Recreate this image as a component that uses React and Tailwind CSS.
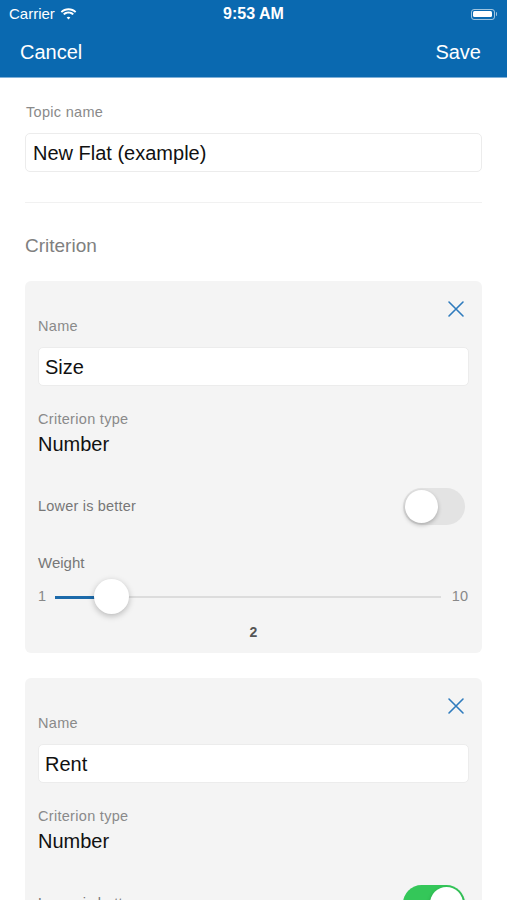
import React from 'react';

const font = { fontFamily: '"Helvetica Neue", "Liberation Sans", Arial, sans-serif' };

function CloseIcon() {
  return (
    <svg width="18" height="18" viewBox="0 0 18 18" fill="none" stroke="#2f7bbd" strokeWidth="1.6" strokeLinecap="round">
      <path d="M2 2L16 16M16 2L2 16" />
    </svg>
  );
}

function Toggle({ on }) {
  return (
    <div
      className={`w-[62px] h-[37px] rounded-full p-[2px] flex ${
        on ? 'bg-[#34c759] justify-end' : 'bg-[#e3e3e3] justify-start'
      }`}
    >
      <div className="w-[33px] h-[33px] rounded-full bg-white shadow-[0_2px_4px_rgba(0,0,0,0.25)]" />
    </div>
  );
}

function Criterion({ name, lowerBetter, weight }) {
  return (
    <div className="bg-[#f4f4f4] rounded-md px-[13px] pt-[20px] pb-[10px]">
      <div className="flex justify-end pr-[4px] h-[15px] items-center">
        <CloseIcon />
      </div>
      <div className="text-[14.5px] tracking-[0.3px] text-[#8a8a8a] leading-[20px]">Name</div>
      <div className="mt-[11px] h-[39px] bg-white rounded-[5px] border border-[#ececec] flex items-center px-[6px] text-[20px] text-[#111]">
        {name}
      </div>
      <div className="text-[14.5px] tracking-[0.3px] text-[#8a8a8a] mt-[23px] leading-[20px]">Criterion type</div>
      <div className="text-[20px] text-[#111] leading-[26px] mt-[2px]">Number</div>
      <div className="flex items-center justify-between mt-[31px] pr-[4px]">
        <div className="text-[14.5px] text-[#777] tracking-[0.2px]">Lower is better</div>
        <Toggle on={lowerBetter} />
      </div>
      <div className="text-[15px] text-[#777] mt-[28px] leading-[20px]">Weight</div>
      <div className="flex items-center h-[40px] mt-[4px] gap-[10px] pr-[1px]">
        <span className="text-[14.5px] text-[#888] w-[7px]">1</span>
        <div className="relative flex-1 h-[2px] bg-[#dcdcdc] mr-[1px]">
          <div className="absolute left-0 top-[-0.5px] h-[3px] w-[56px] bg-[#1c6aaa]" />
          <div className="absolute left-[39px] top-[-17px] w-[35px] h-[35px] rounded-full bg-white shadow-[0_2px_6px_rgba(0,0,0,0.25)]" />
        </div>
        <span className="text-[14.5px] text-[#888]">10</span>
      </div>
      <div className="text-center text-[14px] font-bold text-[#555] mt-[4px] leading-[22px]">{weight}</div>
    </div>
  );
}

export default function App() {
  return (
    <div className="w-[507px] h-[900px] overflow-hidden bg-white" style={font}>
      <div className="bg-[#0a69b0] text-white">
        <div className="h-[28px] flex items-center justify-between px-[9px] relative">
          <div className="flex items-center gap-[5px] text-[15px]">
            <span>Carrier</span>
            <svg width="17" height="12" viewBox="0 0 17 12" fill="white">
              <path d="M8.5 2.2c2.5 0 4.8 1 6.5 2.6l1.3-1.4C14.2 1.4 11.5 0.3 8.5 0.3S2.8 1.4 0.7 3.4L2 4.8c1.7-1.6 4-2.6 6.5-2.6z" />
              <path d="M8.5 5.5c1.6 0 3 .6 4.1 1.6l1.3-1.4C12.5 4.4 10.6 3.6 8.5 3.6S4.5 4.4 3.1 5.7l1.3 1.4c1.1-1 2.5-1.6 4.1-1.6z" />
              <path d="M8.5 8.7c.7 0 1.3.3 1.8.7L8.5 11.4 6.7 9.4c.5-.4 1.1-.7 1.8-.7z" />
            </svg>
          </div>
          <div className="absolute left-0 right-0 text-center text-[16px] font-bold pointer-events-none">9:53 AM</div>
          <div className="flex items-center pr-[1px]">
            <div className="w-[24px] h-[11px] rounded-[3px] border border-white/60 p-[1.5px]">
              <div className="w-full h-full bg-white rounded-[1.5px]" />
            </div>
            <div className="w-[1.5px] h-[4px] bg-white/60 rounded-r-sm ml-[1px]" />
          </div>
        </div>
        <div className="h-[50px] flex items-center justify-between px-[20px] pb-[2px] text-[20px] border-b border-[#7fb0d8]">
          <span>Cancel</span>
          <span className="pr-[6px]">Save</span>
        </div>
      </div>

      <div className="px-[25px]">
        <div className="text-[14.5px] tracking-[0.3px] text-[#8a8a8a] mt-[24px] pl-[1px] leading-[20px]">Topic name</div>
        <div className="mt-[11px] h-[39px] rounded-[5px] border border-[#ececec] flex items-center px-[7px] text-[20px] text-[#111]">
          New Flat (example)
        </div>
        <div className="mt-[30px] h-px bg-[#f1f1f1]" />
        <div className="text-[19px] text-[#808080] mt-[31px] leading-[24px]">Criterion</div>
        <div className="mt-[23px] flex flex-col gap-[25px]">
          <Criterion name="Size" lowerBetter={false} weight={2} />
          <Criterion name="Rent" lowerBetter={true} weight={3} />
        </div>
      </div>
    </div>
  );
}
